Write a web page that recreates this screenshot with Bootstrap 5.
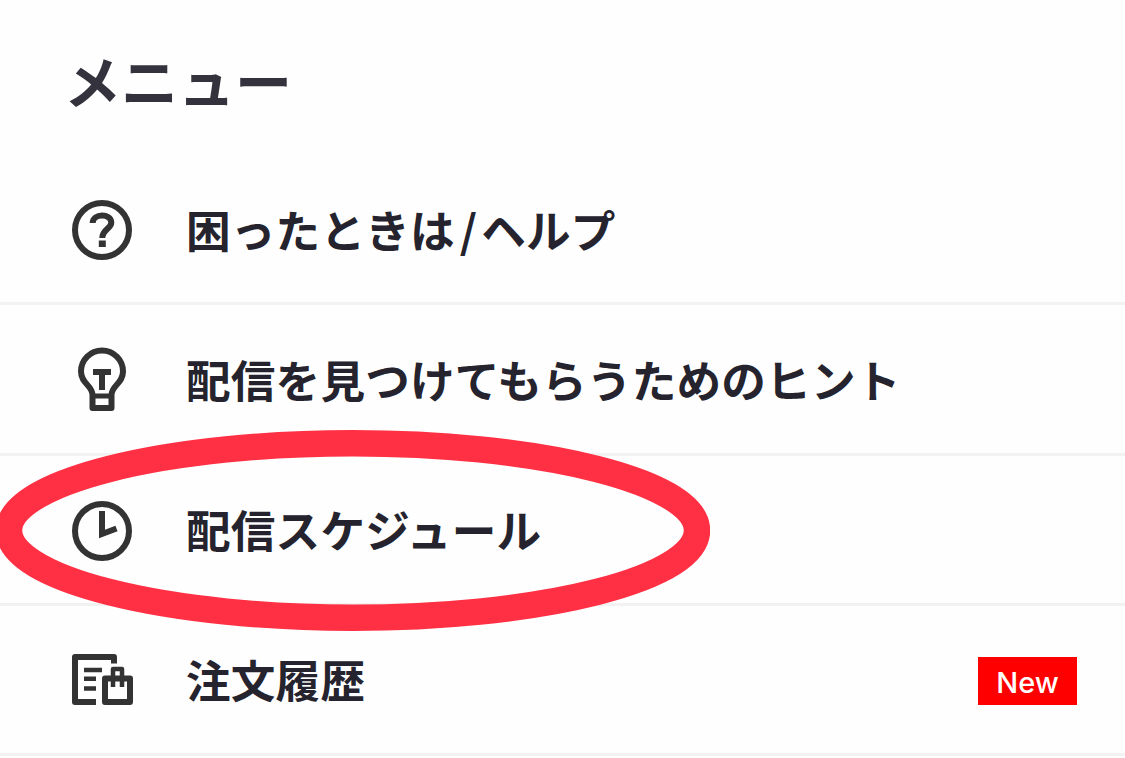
<!DOCTYPE html>
<html lang="ja">
<head>
  <meta charset="UTF-8" />
  <meta name="viewport" content="width=device-width, initial-scale=1.0"/>
  <title>メニュー</title>
  <link href="https://cdn.jsdelivr.net/npm/bootstrap@5.3.2/dist/css/bootstrap.min.css" rel="stylesheet" />
  <style>
    body {
      background-color: #fefefe;
      color: #25232d;
      font-family: "Noto Sans CJK JP", sans-serif;
      overflow: hidden;
    }
    .menu-title {
      height: 155px;
      padding: 41px 0 0 64px;
      font-size: 57px;
      line-height: 76px;
      font-weight: 700;
      color: #34323c;
    }
    .menu-row {
      height: 150.25px;
      padding: 4px 48px 0 70px;
      border-bottom: 3px solid #f2f2f2;
      color: inherit;
    }
    .menu-row:hover {
      color: inherit;
    }
    .menu-icon {
      width: 64px;
      height: 68px;
      margin-right: 52px;
      fill: none;
      stroke: #333;
      stroke-width: 6;
    }
    .menu-label {
      font-size: 44.6px;
      line-height: 60px;
      font-weight: 700;
      letter-spacing: .2px;
      padding-bottom: 4px;
    }
    .slash {
      margin: 0 4px 0 5px;
    }
    .new-badge {
      width: 99px;
      height: 48px;
      padding-top: 2px;
      background: #f00;
      color: #fff;
      font-family: Inter, sans-serif;
      font-size: 29px;
      font-weight: 500;
    }
    .marker {
      left: -4px;
      top: -26px;
      width: 714px;
      height: 202px;
      z-index: 2;
      pointer-events: none;
    }
  </style>
</head>
<body>
  <h1 class="menu-title m-0">メニュー</h1>

  <nav>
    <!-- ヘルプ -->
    <a href="#" class="menu-row d-flex align-items-center text-decoration-none">
      <svg class="menu-icon flex-shrink-0" viewBox="0 0 64 68">
        <circle cx="32" cy="33" r="27"/>
        <path d="M22.700 26C22.700 16 41.300 16 41.300 25.500C41.300 32 32.300 32 32.300 41" stroke-width="6"/>
        <path d="M32.300 43.500v6.500" stroke-width="7"/>
      </svg>
      <span class="menu-label">困ったときは<span class="slash">/</span>ヘルプ</span>
    </a>

    <!-- ヒント -->
    <a href="#" class="menu-row d-flex align-items-center text-decoration-none">
      <svg class="menu-icon flex-shrink-0" viewBox="0 0 64 68">
        <path d="M22.500 48C22.500 38 11 37 11 24.500a21 21 0 0 1 42 0C53 37 41.500 38 41.500 48V61h-19z" stroke-linejoin="round"/>
        <path d="M22 49h20" stroke-width="5"/>
        <path d="M23 25h18M32 25V43" stroke-width="6"/>
      </svg>
      <span class="menu-label">配信を見つけてもらうためのヒント</span>
    </a>

    <!-- スケジュール -->
    <a href="#" class="menu-row position-relative d-flex align-items-center text-decoration-none">
      <svg class="menu-icon flex-shrink-0" viewBox="0 0 64 68">
        <circle cx="32" cy="34" r="27"/>
        <path d="M32 14V37L46.500 31.500" stroke-width="6"/>
      </svg>
      <span class="menu-label">配信スケジュール</span>
      <svg class="marker position-absolute" viewBox="0 0 714 202">
        <ellipse cx="357" cy="100.500" rx="344" ry="87.200" fill="none" stroke="#ff3044" stroke-width="26.500"/>
      </svg>
    </a>

    <!-- 注文履歴 -->
    <a href="#" class="menu-row d-flex align-items-center text-decoration-none">
      <svg class="menu-icon flex-shrink-0" viewBox="0 0 64 68">
        <path d="M26 55H5V10H44V16.500" stroke-linejoin="round"/>
        <path d="M14 23H32M14 31.700H26M14 41.500H26" stroke-width="4.500"/>
        <path d="M35 31.500H60V55H35z" stroke-linejoin="round"/>
        <path d="M43 40V22H52V40" stroke-width="4.500" stroke-linejoin="round"/>
      </svg>
      <span class="menu-label">注文履歴</span>
      <span class="new-badge ms-auto d-flex align-items-center justify-content-center">New</span>
    </a>
  </nav>

  <script src="https://cdn.jsdelivr.net/npm/bootstrap@5.3.2/dist/js/bootstrap.bundle.min.js"></script>
</body>
</html>
